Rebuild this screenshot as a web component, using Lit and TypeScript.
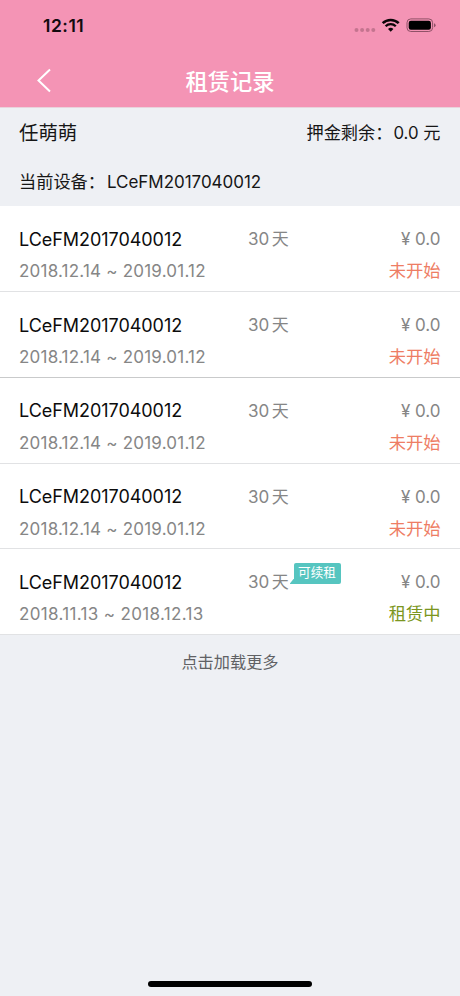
import { LitElement, html, css } from "lit";
import { customElement, property } from "lit/decorators.js";

interface Rental {
  device: string;
  period: string;
  days: number;
  price: string;
  status: string;
  active?: boolean;
}

const DEVICE = "LCeFM2017040012";
const pending: Rental = {
  device: DEVICE,
  period: "2018.12.14 ~ 2019.01.12",
  days: 30,
  price: "0.0",
  status: "未开始",
};
const rentals: Rental[] = [
  pending,
  pending,
  pending,
  pending,
  { ...pending, period: "2018.11.13 ~ 2018.12.13", status: "租赁中", active: true },
];

@customElement("status-bar")
export class StatusBar extends LitElement {
  static styles = css`
    :host {
      display: flex;
      align-items: center;
      justify-content: space-between;
      height: 52px;
      padding: 0 24px 0 43px;
      box-sizing: border-box;
      color: #120a0e;
    }
    .time {
      font-size: 17.5px;
      font-weight: 600;
      line-height: 22px;
      letter-spacing: 0.5px;
    }
    .icons {
      display: block;
    }
  `;
  render() {
    return html`
      <span class="time">12:11</span>
      <svg class="icons" width="84" height="20" viewBox="352 16 84 20">
        <g fill="#c4748f">
          <circle cx="356.5" cy="30" r="2" /><circle cx="362.1" cy="30" r="2" />
          <circle cx="367.7" cy="30" r="2" /><circle cx="373.3" cy="30" r="2" />
        </g>
        <g fill="none" stroke="#0a0507">
          <path d="M382.7 23.2a11.4 11.4 0 0 1 16 0" stroke-width="2.5" />
          <path d="M385.6 26.3a7.2 7.2 0 0 1 10.2 0" stroke-width="2.3" />
        </g>
        <path d="M390.7 31.8l-2.7-2.8a3.8 3.8 0 0 1 5.4 0z" fill="#0a0507" />
        <rect x="407" y="18.9" width="25.6" height="12.6" rx="3.8" fill="none" stroke="#8f5167" />
        <rect x="408.7" y="20.7" width="22.2" height="9" rx="2.2" fill="#000" />
        <path d="M434 23.2q1.6.7 1.6 2t-1.6 2z" fill="#8f5167" />
      </svg>
    `;
  }
}

@customElement("rental-row")
export class RentalRow extends LitElement {
  @property({ attribute: false }) rental!: Rental;
  static styles = css`
    :host {
      display: block;
      height: 85.8px;
      box-sizing: border-box;
      padding: 20px 19.5px 0 19px;
      background: #fff;
      border-bottom: 1px solid #e1e2e4;
      color: #868686;
    }
    :host(:nth-child(2)) {
      border-bottom-color: #c9cacb;
    }
    .line {
      display: grid;
      grid-template-columns: 229px 1fr auto;
      height: 25px;
      line-height: 25px;
      align-items: center;
    }
    .second {
      grid-template-columns: 1fr auto;
      margin-top: 7px;
    }
    .device {
      font-size: 18px;
      letter-spacing: -0.04px;
      color: #0c0c0c;
    }
    .period,
    .price {
      font-size: 17px;
      padding-top: 1px;
    }
    .period {
      letter-spacing: 0.21px;
    }
    .current {
      letter-spacing: 0.34px;
    }
    .days {
      position: relative;
      font-size: 17px;
      padding-top: 1px;
    }
    .unit {
      margin-left: 2.5px;
    }
    .status {
      font-size: 17.3px;
      line-height: 23px;
      margin-top: -1px;
      color: #ee7d64;
    }
    .active {
      color: #7b9620;
    }
    .badge {
      position: absolute;
      left: 45.5px;
      top: -6px;
      width: 47px;
      height: 20.5px;
      line-height: 20px;
      border-radius: 2px;
      background: #56c5c0;
      color: #fff;
      font-size: 12.6px;
      text-align: center;
    }
    .tail {
      position: absolute;
      left: -4px;
      bottom: 0;
      width: 8px;
      height: 5px;
      background: #56c5c0;
      clip-path: polygon(4px 0, 8px 0, 8px 5px, 0 5px);
    }
  `;
  render() {
    const r = this.rental;
    return html`
      <div class="line">
        <span class="device">${r.device}</span>
        <span class="days"
          >${r.days}<span class="unit">天</span>${r.active
            ? html`<span class="badge"><i class="tail"></i>可续租</span>`
            : null}</span
        >
        <span class="price">¥ ${r.price}</span>
      </div>
      <div class="line second">
        <span class="period ${r.active ? "current" : ""}">${r.period}</span>
        <span class="status ${r.active ? "active" : ""}">${r.status}</span>
      </div>
    `;
  }
}

@customElement("app-root")
export class AppRoot extends LitElement {
  static styles = css`
    :host {
      display: flex;
      flex-direction: column;
      height: 996px;
      background: #eef0f4;
      font-family: Inter, "Noto Sans CJK SC", sans-serif;
      color: #161616;
      overflow: hidden;
    }
    .top {
      height: 107px;
      background: #f494b5;
      border-bottom: 1px solid #e9d3dc;
      flex: none;
    }
    .nav {
      display: grid;
      grid-template-columns: 60px 1fr 60px;
      align-items: center;
      height: 55px;
      color: #fff;
    }
    .back {
      display: block;
      margin: 1px 0 0 35px;
    }
    .title {
      text-align: center;
      font-size: 22.3px;
      font-weight: 500;
      line-height: 30px;
      padding-top: 5px;
    }
    .summary {
      height: 98.3px;
      flex: none;
      box-sizing: border-box;
      padding: 0 19.5px 0 19px;
      font-size: 17.2px;
      line-height: 49px;
    }
    .account {
      display: flex;
      justify-content: space-between;
      height: 49px;
    }
    .name {
      font-size: 19.4px;
      padding-top: 1px;
    }
    .amount {
      font-size: 16.8px;
      margin-left: 1px;
    }
    .device {
      font-size: 17px;
      margin-left: 2px;
      letter-spacing: -0.03px;
    }
    .more {
      padding-top: 15px;
      text-align: center;
      font-size: 16.2px;
      line-height: 25px;
      color: #606164;
    }
    .home {
      width: 164px;
      height: 6px;
      border-radius: 3px;
      background: #000;
      margin: auto auto 9px;
    }
  `;
  render() {
    return html`
      <header class="top">
        <status-bar></status-bar>
        <div class="nav">
          <svg class="back" width="18" height="26" viewBox="0 0 18 26">
            <path d="M15 2.5L3.5 13.5L15 24.5" fill="none" stroke="#fff" stroke-width="2" />
          </svg>
          <span class="title">租赁记录</span>
        </div>
      </header>
      <section class="summary">
        <div class="account">
          <span class="name">任萌萌</span>
          <span>押金剩余：<span class="amount">0.0 </span>元</span>
        </div>
        <div>当前设备：<span class="device">${DEVICE}</span></div>
      </section>
      <main>${rentals.map((r) => html`<rental-row .rental=${r}></rental-row>`)}</main>
      <div class="more">点击加载更多</div>
      <div class="home"></div>
    `;
  }
}
